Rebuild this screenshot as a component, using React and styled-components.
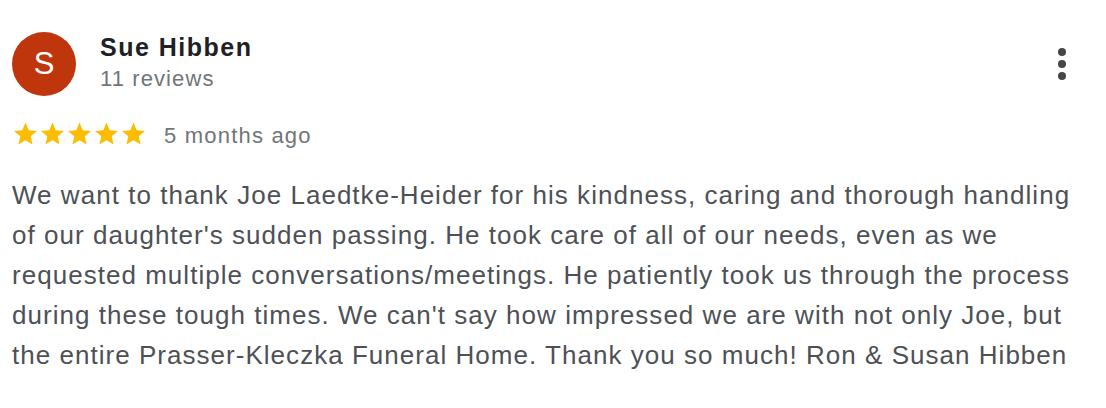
import styled, { createGlobalStyle } from "styled-components";

const GlobalStyle = createGlobalStyle`
body {
  margin: 0;
  background: #fff;
  font-family: "Liberation Sans", Arial, sans-serif;
}
`

const Card = styled.div`
width: 1106px;
height: 408px;
box-sizing: border-box;
padding: 32px 12px 0 12px;
display: flex;
flex-direction: column;
`

const Header = styled.div`
display: flex;
flex-direction: row;
align-items: flex-start;
`

const Avatar = styled.div`
width: 64px;
height: 64px;
border-radius: 50%;
background-color: #bf360c;
color: #fff;
display: flex;
justify-content: center;
align-items: center;
font-size: 31px;
flex-shrink: 0;
`

const Who = styled.div`
display: flex;
flex-direction: column;
margin-left: 24px;
flex: 1;
`

const Name = styled.div`
font-size: 25px;
font-weight: bold;
color: #202124;
line-height: 30px;
letter-spacing: 1.5px;
`

const Count = styled.div`
font-size: 22px;
color: #70757a;
line-height: 30px;
margin-top: 2px;
letter-spacing: 1.1px;
`

const MoreButton = styled.div`
display: flex;
flex-direction: column;
align-items: center;
gap: 4px;
padding-top: 16px;
margin-right: 28px;
`

const Dot = styled.div`
width: 8px;
height: 8px;
border-radius: 50%;
background-color: #444746;
`

const RatingRow = styled.div`
display: flex;
align-items: flex-start;
margin-top: 26px;
`

const Stars = styled.div`
display: flex;
margin-right: 17px;
`

const When = styled.div`
font-size: 22px;
line-height: 23px;
margin-top: 2px;
color: #70757a;
letter-spacing: 1.2px;
`

const Body = styled.p`
margin: 28px 0 0 0;
font-size: 26px;
line-height: 40px;
color: #4d5156;
letter-spacing: 1.03px;
`

const Star = () => (
    <svg width="27" height="23" viewBox="0.5 1.5 23 20">
        <path fill="#fbbc04" d="M12 17.27L18.18 21l-1.64-7.03L22 9.24l-7.19-.61L12 2 9.19 8.63 2 9.24l5.46 4.73L5.82 21z" />
    </svg>
)

const App = () => {
    return (
        <Card>
            <GlobalStyle />
            <Header>
                <Avatar>S</Avatar>
                <Who>
                    <Name>Sue Hibben</Name>
                    <Count>11 reviews</Count>
                </Who>
                <MoreButton>
                    <Dot />
                    <Dot />
                    <Dot />
                </MoreButton>
            </Header>
            <RatingRow>
                <Stars>
                    {[0, 1, 2, 3, 4].map(i => <Star key={i} />)}
                </Stars>
                <When>5 months ago</When>
            </RatingRow>
            <Body>
                We want to thank Joe Laedtke-Heider for his kindness, caring and thorough handling of our daughter's sudden passing. He took care of all of our needs, even as we requested multiple conversations/meetings. He patiently took us through the process during these tough times. We can't say how impressed we are with not only Joe, but the entire Prasser-Kleczka Funeral Home. Thank you so much! Ron &amp; Susan Hibben
            </Body>
        </Card>
    )
}

export default App;
